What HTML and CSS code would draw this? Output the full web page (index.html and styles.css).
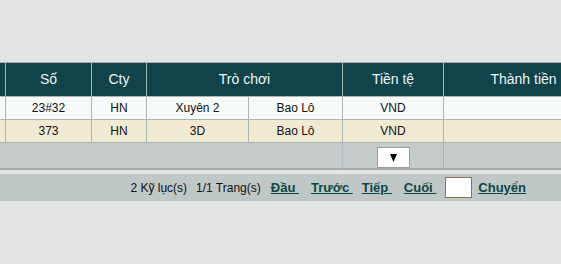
FILE: index.html
```html
<!DOCTYPE html>
<html lang="vi">
<head>
<meta charset="utf-8">
<title>Danh sách</title>
<link rel="stylesheet" href="styles.css">
</head>
<body>
<div class="page">
  <div class="viewport">
    <table class="grid">
      <colgroup>
        <col class="c0"><col class="c1"><col class="c2"><col class="c3"><col class="c4"><col class="c5"><col class="c6">
      </colgroup>
      <thead>
        <tr>
          <th></th><th>Số</th><th>Cty</th><th colspan="2">Trò chơi</th><th>Tiền tệ</th><th>Thành tiền</th>
        </tr>
      </thead>
      <tbody>
        <tr class="r1">
          <td></td><td>23#32</td><td>HN</td><td>Xuyên 2</td><td>Bao Lô</td><td>VND</td><td></td>
        </tr>
        <tr class="r2">
          <td></td><td>373</td><td>HN</td><td>3D</td><td>Bao Lô</td><td>VND</td><td></td>
        </tr>
      </tbody>
      <tfoot>
        <tr>
          <td colspan="5" class="fleft"></td>
          <td class="fcur"><span class="dd"><svg width="7" height="8" viewBox="0 0 7 8"><polygon points="0,0 7,0 3.5,8" fill="#000"/></svg></span></td>
          <td class="fright"></td>
        </tr>
      </tfoot>
    </table>
  </div>
  <div class="pager">
    <span class="info">2 Kỹ lục(s)</span>
    <span class="info second">1/1 Trang(s)</span>
    <a class="lnk first" href="#">Đầu&nbsp;</a>
    <a class="lnk wide" href="#">Trước&nbsp;</a>
    <a class="lnk" href="#">Tiếp&nbsp;</a>
    <a class="lnk wide" href="#">Cuối&nbsp;</a>
    <input class="goto" type="text" value="">
    <a class="lnk last" href="#">Chuyển</a>
  </div>
</div>
</body>
</html>
```
FILE: styles.css
```css
html, body {
  margin: 0;
  padding: 0;
}
body {
  background: #e3e5e4;
  overflow: hidden;
  font-family: "Liberation Sans", Arial, sans-serif;
}
.page {
  padding-top: 62px;
}
.viewport {
  overflow: hidden;
  width: 561px;
}
.grid {
  table-layout: fixed;
  border-collapse: separate;
  border-spacing: 0;
  width: 639px;
  margin-left: -35px;
  border-top: 1px solid #a3b1b1;
}
.c0 { width: 41px; }
.c1 { width: 86px; }
.c2 { width: 55px; }
.c3 { width: 102px; }
.c4 { width: 94px; }
.c5 { width: 101px; }
.c6 { width: 160px; }
.grid th,
.grid td {
  padding: 0;
  border-right: 1px solid #a9b6b6;
  border-bottom: 1px solid #a9b6b6;
  text-align: center;
  white-space: nowrap;
  overflow: hidden;
}
.grid th {
  background: #10434a;
  color: #eef5f5;
  font-weight: normal;
  font-size: 14px;
  line-height: 33px;
}
.grid tbody td {
  font-size: 12px;
  color: #111;
  line-height: 22px;
}
.r1 td { background: #f7fbfa; }
.r2 td { background: #f1ead3; }
.grid tfoot td {
  background: #c6cccc;
  height: 21px;
  padding-top: 4px;
  line-height: 0;
  vertical-align: top;
  border-bottom: 2px solid #9eacac;
}
.grid tfoot td.fleft { border-right: 1px solid #b3bebe; }
.dd {
  display: inline-flex;
  align-items: center;
  justify-content: center;
  box-sizing: border-box;
  width: 33px;
  height: 21px;
  background: #fff;
  border: 1px solid #9c9c9c;
}
.pager {
  margin-top: 4px;
  height: 27px;
  background: #c0c7c7;
  display: flex;
  align-items: center;
  justify-content: flex-end;
  padding-right: 35px;
}
.info {
  font-size: 12px;
  color: #111;
}
.info.second { margin-left: 9px; }
.lnk {
  font-size: 13px;
  font-weight: bold;
  color: #0c4845;
  text-decoration: underline;
  margin-left: 9px;
}
.lnk.first { margin-left: 10px; }
.lnk.wide { margin-left: 12px; }
.goto {
  box-sizing: border-box;
  width: 27px;
  height: 21px;
  margin: 0 0 0 9px;
  padding: 0;
  border: 1px solid #8c7253;
  background: #fff;
}
.lnk.last { margin-left: 6px; }
```
